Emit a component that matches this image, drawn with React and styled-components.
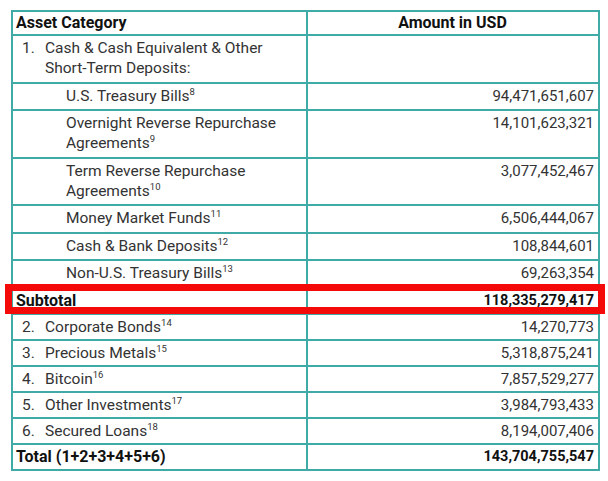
import React from "react";
import styled, { createGlobalStyle } from "styled-components";

const GlobalStyle = createGlobalStyle`
	body {
		margin: 0;
		background: #ffffff;
		font-family: Roboto, "Liberation Sans", sans-serif;
		color: #333333;
	}
`;

const TEAL = "#40aba6";

const Table = styled.div`
	width: 589px;
	margin: 10px 0 0 11px;
	border: 2px solid ${TEAL};
	box-sizing: border-box;
	font-size: 15.5px;
	line-height: 20px;
`;

const Row = styled.div`
	position: relative;
	display: grid;
	grid-template-columns: 293px 1fr;
	border-bottom: ${(p) => (p.$last ? "none" : `2px solid ${TEAL}`)};
	font-weight: ${(p) => (p.$bold ? 700 : 400)};
	color: ${(p) => (p.$bold ? "#111111" : "#333333")};

	${(p) =>
		p.$marked &&
		`
		&::after {
			content: "";
			position: absolute;
			top: -5px;
			bottom: -1px;
			left: -8px;
			right: -7px;
			border: 7.5px solid #f50a0a;
			pointer-events: none;
			z-index: 2;
		}
	`}
`;

const Cell = styled.div`
	padding: ${(p) => (p.$tight ? "2px 4px 2px 3px" : "2px 4px 3.5px 3px")};
	text-align: ${(p) => p.$align || "left"};
	font-size: ${(p) => p.$size || "inherit"};
	& + & {
		border-left: 2px solid ${TEAL};
	}
`;

const HeadCell = styled(Cell)`
	padding: 1px 4px 1px 3px;
	font-size: 16px;
	font-weight: 700;
	color: #111111;
`;

const Item = styled.div`
	display: flex;
	padding-left: ${(p) => (p.$sub ? "50px" : "6px")};
`;

const Num = styled.span`
	width: 23px;
	flex: none;
`;

const Sup = styled.sup`
	font-size: 9.5px;
	line-height: 0;
	vertical-align: 6px;
`;

const rows = [
	{ num: "1.", lines: ["Cash & Cash Equivalent & Other", "Short-Term Deposits:"], amount: "" },
	{ sub: true, lines: ["U.S. Treasury Bills"], sup: "8", amount: "94,471,651,607" },
	{ sub: true, lines: ["Overnight Reverse Repurchase", "Agreements"], sup: "9", amount: "14,101,623,321" },
	{ sub: true, lines: ["Term Reverse Repurchase", "Agreements"], sup: "10", amount: "3,077,452,467" },
	{ sub: true, lines: ["Money Market Funds"], sup: "11", amount: "6,506,444,067" },
	{ sub: true, lines: ["Cash & Bank Deposits"], sup: "12", amount: "108,844,601" },
	{ sub: true, lines: ["Non-U.S. Treasury Bills"], sup: "13", amount: "69,263,354" },
	{ total: true, marked: true, label: "Subtotal", amount: "118,335,279,417", tight: true },
	{ num: "2.", lines: ["Corporate Bonds"], sup: "14", amount: "14,270,773", tight: true },
	{ num: "3.", lines: ["Precious Metals"], sup: "15", amount: "5,318,875,241", tight: true },
	{ num: "4.", lines: ["Bitcoin"], sup: "16", amount: "7,857,529,277", tight: true },
	{ num: "5.", lines: ["Other Investments"], sup: "17", amount: "3,984,793,433", tight: true },
	{ num: "6.", lines: ["Secured Loans"], sup: "18", amount: "8,194,007,406", tight: true },
	{ total: true, label: "Total (1+2+3+4+5+6)", amount: "143,704,755,547", tight: true },
];

function Label({ row }) {
	const text = row.lines.map((line, i) => (
		<React.Fragment key={i}>
			{i > 0 && <br />}
			{line}
			{i === row.lines.length - 1 && row.sup && <Sup>{row.sup}</Sup>}
		</React.Fragment>
	));
	return (
		<Item $sub={row.sub}>
			{row.num && <Num>{row.num}</Num>}
			<span>{text}</span>
		</Item>
	);
}

export default function App() {
	return (
		<>
			<GlobalStyle />
			<Table>
				<Row>
					<HeadCell>Asset Category</HeadCell>
					<HeadCell $align="center">Amount in USD</HeadCell>
				</Row>
				{rows.map((row, i) => (
					<Row key={i} $bold={row.total} $marked={row.marked} $last={i === rows.length - 1}>
						<Cell $tight={row.tight} $size={row.total ? "16px" : undefined}>
							{row.total ? row.label : <Label row={row} />}
						</Cell>
						<Cell $tight={row.tight} $align="right" $size={row.total ? "14.5px" : "15px"}>
							{row.amount}
						</Cell>
					</Row>
				))}
			</Table>
		</>
	);
}
